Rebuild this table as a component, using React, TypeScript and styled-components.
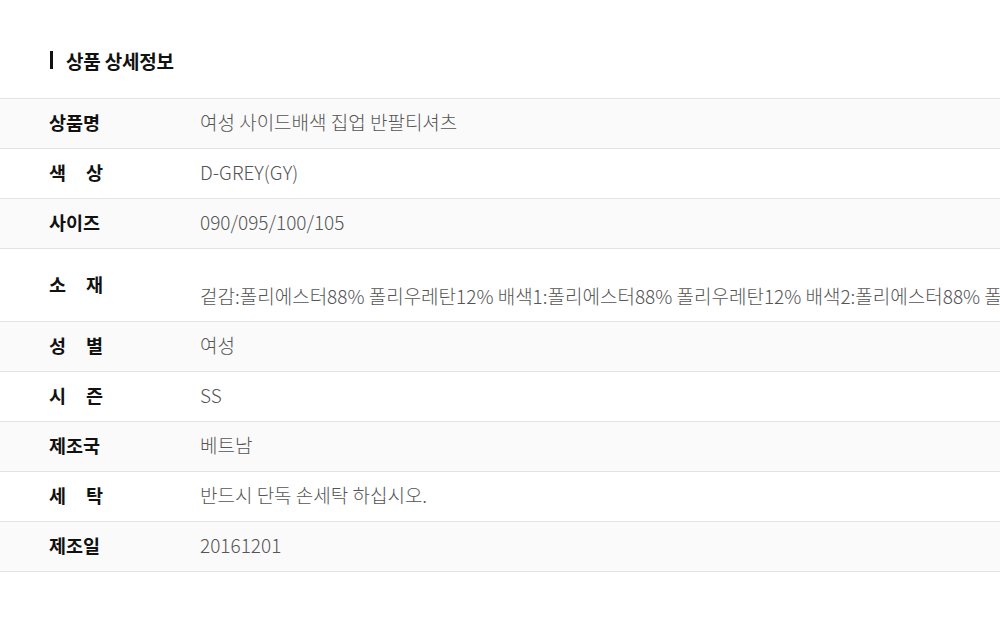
import React from "react";
import styled, { createGlobalStyle } from "styled-components";

const GlobalStyle = createGlobalStyle`
  html, body {
    margin: 0;
    padding: 0;
    background: #ffffff;
  }
  body {
    font-family: "Noto Sans CJK KR", "Noto Sans", sans-serif;
    overflow: hidden;
  }
`;

const Page = styled.div`
  width: 1000px;
  height: 621px;
  overflow: hidden;
  padding-top: 47px;
  box-sizing: border-box;
`;

const Title = styled.h2`
  display: flex;
  align-items: center;
  margin: 0 0 0 50px;
  height: 26px;
  font-size: 19px;
  font-weight: 700;
  color: #111;
  letter-spacing: -0.2px;
`;

const TitleBar = styled.span`
  display: inline-block;
  width: 3px;
  height: 18px;
  background: #111;
  margin-right: 13px;
`;

const Table = styled.div`
  margin-top: 25px;
  border-top: 1px solid #e3e3e3;
  width: 1000px;
`;

const Row = styled.div<{ $shade: boolean; $tall?: boolean }>`
  display: flex;
  align-items: center;
  height: ${(p) => (p.$tall ? 72 : 49)}px;
  border-bottom: 1px solid #e3e3e3;
  background: ${(p) => (p.$shade ? "#fafafa" : "#ffffff")};
  white-space: nowrap;
  overflow: hidden;
`;

const Label = styled.div`
  flex: 0 0 auto;
  width: 54px;
  margin-left: 49px;
  margin-right: 97px;
  display: flex;
  justify-content: space-between;
  font-size: 18.5px;
  font-weight: 700;
  color: #111;
  line-height: 24px;
  margin-top: -3px;
`;

const Value = styled.div<{ $drop?: boolean }>`
  flex: 0 0 auto;
  font-size: 19px;
  font-weight: 300;
  color: #555;
  line-height: 24px;
  margin-top: ${(p) => (p.$drop ? 21 : -3)}px;
`;

type Item = { label: string[]; value: string; tall?: boolean };

const items: Item[] = [
  { label: ["상품명"], value: "여성 사이드배색 집업 반팔티셔츠" },
  { label: ["색", "상"], value: "D-GREY(GY)" },
  { label: ["사이즈"], value: "090/095/100/105" },
  {
    label: ["소", "재"],
    value:
      "겉감:폴리에스터88% 폴리우레탄12% 배색1:폴리에스터88% 폴리우레탄12% 배색2:폴리에스터88% 폴리우레탄12%",
    tall: true,
  },
  { label: ["성", "별"], value: "여성" },
  { label: ["시", "즌"], value: "SS" },
  { label: ["제조국"], value: "베트남" },
  { label: ["세", "탁"], value: "반드시 단독 손세탁 하십시오." },
  { label: ["제조일"], value: "20161201" },
];

export default function App() {
  return (
    <>
      <GlobalStyle />
      <Page>
        <Title>
          <TitleBar />
          상품 상세정보
        </Title>
        <Table>
          {items.map((it, i) => (
            <Row key={i} $shade={i % 2 === 0} $tall={it.tall}>
              <Label>
                {it.label.map((l, j) => (
                  <span key={j}>{l}</span>
                ))}
              </Label>
              <Value $drop={it.tall}>{it.value}</Value>
            </Row>
          ))}
        </Table>
      </Page>
    </>
  );
}
